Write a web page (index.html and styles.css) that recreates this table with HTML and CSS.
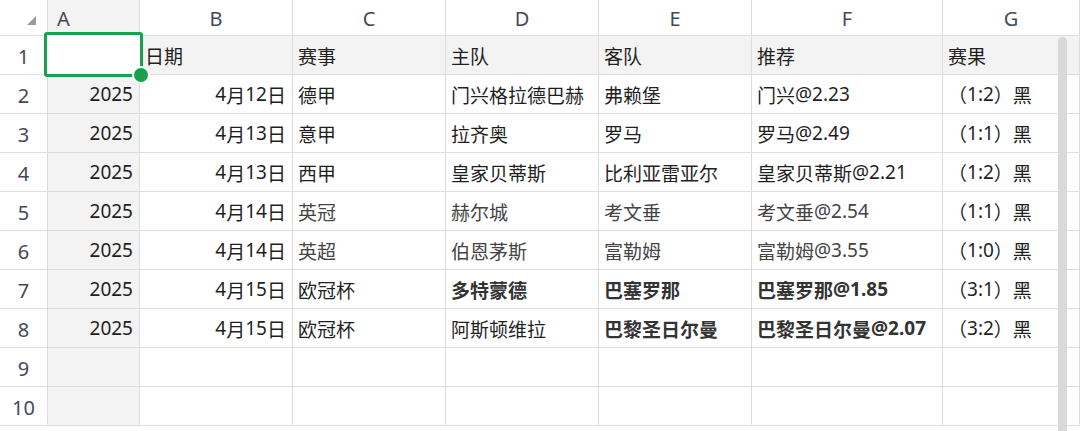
FILE: index.html
```html
<!DOCTYPE html>
<html lang="zh-CN">
<head>
<meta charset="utf-8">
<title>Sheet</title>
<link rel="stylesheet" href="styles.css">
</head>
<body>
<div class="sheet">
  <div class="grid">
    <div class="corner"><span class="tri"></span></div>
    <div class="colh sel first">A</div>
    <div class="colh">B</div>
    <div class="colh">C</div>
    <div class="colh">D</div>
    <div class="colh">E</div>
    <div class="colh">F</div>
    <div class="colh">G</div>

    <div class="rowh">1</div>
    <div class="c hl colA"></div>
    <div class="c hl">日期</div>
    <div class="c hl">赛事</div>
    <div class="c hl">主队</div>
    <div class="c hl">客队</div>
    <div class="c hl">推荐</div>
    <div class="c hl">赛果</div>

    <div class="rowh">2</div>
    <div class="c colA r"><span class="n">2025</span></div>
    <div class="c r"><span class="n">4</span>月<span class="n">12</span>日</div>
    <div class="c">德甲</div>
    <div class="c">门兴格拉德巴赫</div>
    <div class="c">弗赖堡</div>
    <div class="c">门兴<span class="n">@2.23</span></div>
    <div class="c">（<span class="n">1:2</span>）黑</div>

    <div class="rowh">3</div>
    <div class="c colA r"><span class="n">2025</span></div>
    <div class="c r"><span class="n">4</span>月<span class="n">13</span>日</div>
    <div class="c">意甲</div>
    <div class="c">拉齐奥</div>
    <div class="c">罗马</div>
    <div class="c">罗马<span class="n">@2.49</span></div>
    <div class="c">（<span class="n">1:1</span>）黑</div>

    <div class="rowh">4</div>
    <div class="c colA r"><span class="n">2025</span></div>
    <div class="c r"><span class="n">4</span>月<span class="n">13</span>日</div>
    <div class="c">西甲</div>
    <div class="c">皇家贝蒂斯</div>
    <div class="c">比利亚雷亚尔</div>
    <div class="c">皇家贝蒂斯<span class="n">@2.21</span></div>
    <div class="c">（<span class="n">1:2</span>）黑</div>

    <div class="rowh">5</div>
    <div class="c colA r"><span class="n">2025</span></div>
    <div class="c r"><span class="n">4</span>月<span class="n">14</span>日</div>
    <div class="c soft">英冠</div>
    <div class="c soft">赫尔城</div>
    <div class="c soft">考文垂</div>
    <div class="c soft">考文垂<span class="n">@2.54</span></div>
    <div class="c">（<span class="n">1:1</span>）黑</div>

    <div class="rowh">6</div>
    <div class="c colA r"><span class="n">2025</span></div>
    <div class="c r"><span class="n">4</span>月<span class="n">14</span>日</div>
    <div class="c soft">英超</div>
    <div class="c soft">伯恩茅斯</div>
    <div class="c soft">富勒姆</div>
    <div class="c soft">富勒姆<span class="n">@3.55</span></div>
    <div class="c">（<span class="n">1:0</span>）黑</div>

    <div class="rowh">7</div>
    <div class="c colA r"><span class="n">2025</span></div>
    <div class="c r"><span class="n">4</span>月<span class="n">15</span>日</div>
    <div class="c">欧冠杯</div>
    <div class="c b">多特蒙德</div>
    <div class="c b">巴塞罗那</div>
    <div class="c b">巴塞罗那<span class="n">@1.85</span></div>
    <div class="c">（<span class="n">3:1</span>）黑</div>

    <div class="rowh">8</div>
    <div class="c colA r"><span class="n">2025</span></div>
    <div class="c r"><span class="n">4</span>月<span class="n">15</span>日</div>
    <div class="c">欧冠杯</div>
    <div class="c">阿斯顿维拉</div>
    <div class="c b">巴黎圣日尔曼</div>
    <div class="c b">巴黎圣日尔曼<span class="n">@2.07</span></div>
    <div class="c">（<span class="n">3:2</span>）黑</div>

    <div class="rowh">9</div>
    <div class="c colA"></div>
    <div class="c"></div>
    <div class="c"></div>
    <div class="c"></div>
    <div class="c"></div>
    <div class="c"></div>
    <div class="c"></div>

    <div class="rowh">10</div>
    <div class="c colA"></div>
    <div class="c"></div>
    <div class="c"></div>
    <div class="c"></div>
    <div class="c"></div>
    <div class="c"></div>
    <div class="c"></div>
  </div>
  <div class="selection"><span class="handle"></span></div>
  <div class="scrollbar"></div>
</div>
</body>
</html>
```

FILE: styles.css
```css
html, body {
  margin: 0;
  padding: 0;
  background: #ffffff;
}
body {
  font-family: "Noto Sans CJK SC", sans-serif;
  color: #1f1f1f;
  overflow: hidden;
}
.n {
  font-family: "Noto Sans", "Noto Sans CJK SC", sans-serif;
}
.sheet {
  position: relative;
  width: 1080px;
  height: 431px;
  overflow: hidden;
}
.grid {
  display: grid;
  grid-template-columns: 48px 92px 153px 153px 153px 153px 191px 137px;
  grid-template-rows: 36px repeat(11, 39px);
}
.grid > div {
  box-sizing: border-box;
  border-right: 1px solid #dedede;
  border-bottom: 1px solid #dedede;
  overflow: hidden;
  white-space: nowrap;
}
.corner {
  position: relative;
  display: flex;
  align-items: flex-end;
  justify-content: flex-end;
  padding: 0 11px 10px 0;
}
.tri {
  width: 0;
  height: 0;
  border-left: 9px solid transparent;
  border-bottom: 9px solid #9a9a9a;
}
.colh {
  display: flex;
  align-items: center;
  justify-content: center;
  font-family: "Noto Sans", sans-serif;
  font-size: 20px;
  color: #434a5a;
  padding-top: 1px;
}
.colh.first {
  justify-content: flex-start;
  padding-left: 9px;
}
.colh.sel {
  background: #f3f3f4;
}
.rowh {
  display: flex;
  align-items: center;
  justify-content: center;
  font-family: "Noto Sans", sans-serif;
  font-size: 20px;
  color: #434a5a;
  padding-top: 2px;
}
.c {
  display: flex;
  align-items: center;
  font-size: 19px;
  padding: 0 5px 0 5px;
  color: #1f1f1f;
}
.c.r {
  justify-content: flex-end;
  padding-right: 6px;
}
.c.hl {
  background: #f3f3f3;
}
.colA {
  background: #f3f3f3;
}
.c.soft {
  color: #444444;
}
.c.b {
  font-weight: 700;
  color: #333333;
}
.selection {
  position: absolute;
  left: 44px;
  top: 32px;
  width: 99px;
  height: 45px;
  box-sizing: border-box;
  border: 3px solid #1aa14e;
  border-radius: 3px;
  background: #ffffff;
}
.handle {
  position: absolute;
  right: -10px;
  bottom: -10px;
  width: 14px;
  height: 14px;
  border-radius: 50%;
  background: #16a14c;
  border: 2px solid #ffffff;
}
.scrollbar {
  position: absolute;
  left: 1058px;
  top: 37px;
  width: 9px;
  height: 400px;
  background: #d9d9d9;
  border-radius: 5px;
}
```
